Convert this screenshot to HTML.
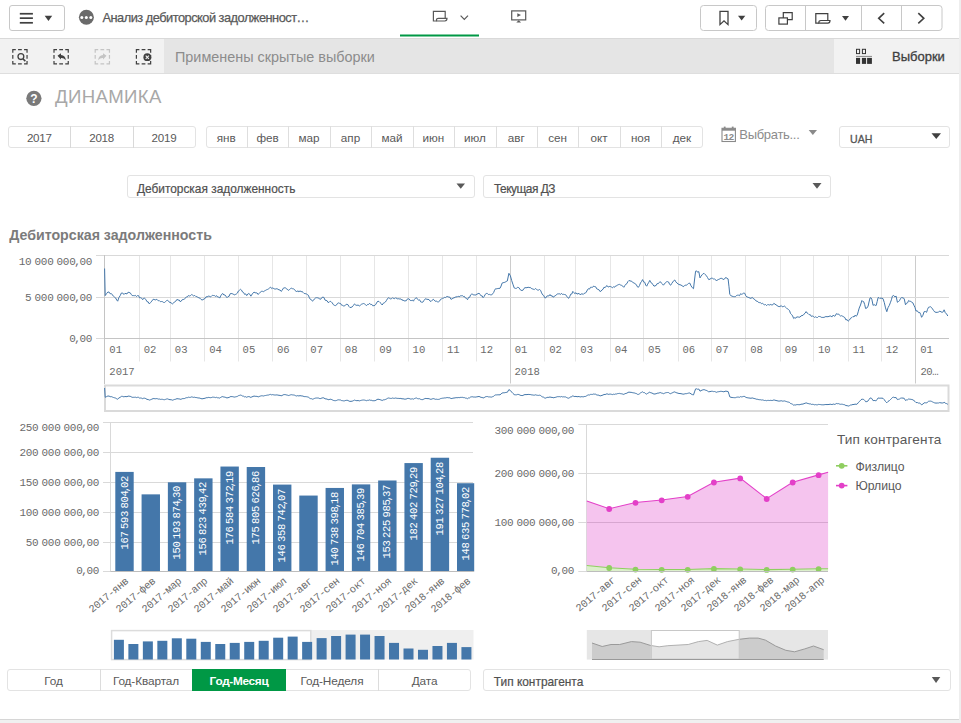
<!DOCTYPE html>
<html><head><meta charset="utf-8"><style>
html,body{margin:0;padding:0;}
body{width:961px;height:723px;position:relative;overflow:hidden;background:#ffffff;font-family:"Liberation Sans", sans-serif;}
.t{position:absolute;white-space:nowrap;line-height:1;}
svg{position:absolute;left:0;top:0;}
</style></head><body>

<div style="position:absolute;left:959px;top:0px;width:2px;height:723px;background:#eeeeee;"></div>
<div style="position:absolute;left:0px;top:719px;width:959px;height:1px;background:#d6d6d6;"></div>
<div style="position:absolute;left:0px;top:720px;width:961px;height:3px;background:#f0f0f0;"></div>
<div style="position:absolute;left:9px;top:5px;width:56px;height:26.3px;box-sizing:border-box;border:1px solid #c8c8c8;border-radius:3px;background:#fff;"></div>
<svg width="961" height="40" style="left:0;top:0">
<g fill="#404040">
<rect x="19.8" y="12.9" width="13.1" height="1.7"/><rect x="19.8" y="17.3" width="13.1" height="1.7"/><rect x="19.8" y="21.95" width="13.1" height="1.7"/>
<path d="M44.7 15.8 L52.2 15.8 L48.45 20.9 Z"/>
</g>
<circle cx="86.4" cy="17.3" r="7.5" fill="#6a6a6a"/>
<circle cx="81.8" cy="17.4" r="1.5" fill="#fff"/><circle cx="86.3" cy="17.4" r="1.5" fill="#fff"/><circle cx="90.8" cy="17.4" r="1.5" fill="#fff"/>
<!-- sheet icon -->
<g fill="none" stroke="#595959" stroke-width="1.2">
<path d="M445.2 18.2 V11.4 H433.4 V21 H436.6"/>
<path d="M436.6 21 Q436 18.3 438.6 18.3 H447 Q447 21 444.8 21 Z"/>
<path d="M460.6 15.6 L464.3 19.3 L468 15.6"/>
</g>
<rect x="400" y="34.5" width="79" height="2" fill="#009845"/>
<!-- present icon -->
<rect x="511.7" y="10.9" width="14" height="9" fill="none" stroke="#595959" stroke-width="1.2"/>
<path d="M517.3 13.2 L521 15 L517.3 16.9 Z" fill="#595959"/>
<path d="M516.3 22.6 L521.1 22.6 L518.7 20.2 Z" fill="#595959"/>
<!-- bookmark button -->
<rect x="700.5" y="5.5" width="56" height="25" rx="3" fill="#fff" stroke="#c8c8c8"/>
<path d="M720 11.4 V24.6 L724 20.8 L728 24.6 V11.4 Z" fill="none" stroke="#404040" stroke-width="1.3"/>
<path d="M738 15.8 L745.3 15.8 L741.65 20.6 Z" fill="#404040"/>
<!-- group -->
<rect x="765.5" y="5.5" width="176.5" height="25" rx="3" fill="#fff" stroke="#c8c8c8"/>
<path d="M805.5 5.5 V30.5 M861.5 5.5 V30.5 M901.5 5.5 V30.5" stroke="#c8c8c8"/>
<g fill="none" stroke="#404040" stroke-width="1.2">
<rect x="778.9" y="17.9" width="8.5" height="6.2"/>
<path d="M783.3 17.9 V12.6 H792.2 V19.6 H787.4"/>
<path d="M827.8 20.3 V13.6 H815.8 V23.2 H819"/>
<path d="M819 23.2 Q818.4 20.5 821 20.5 H830 Q830 23.2 827.8 23.2 Z"/>
<path d="M884.2 13.2 L878.7 18.3 L884.2 23.4" stroke-width="1.6"/>
<path d="M918.3 13.2 L923.8 18.3 L918.3 23.4" stroke-width="1.6"/>
</g>
<path d="M842 16 L849 16 L845.5 20.8 Z" fill="#404040"/>
</svg>
<div class="t" style="left:102.50px;top:12.06px;font-size:12.8px;color:#595959;font-weight:400;font-family:'Liberation Sans', sans-serif;letter-spacing:-0.5px;-webkit-text-stroke:0.25px #595959;">Анализ дебиторской задолженност…</div>
<div style="position:absolute;left:0px;top:38px;width:959px;height:1px;background:#d9d9d9;"></div>
<div style="position:absolute;left:0px;top:39px;width:164px;height:34px;background:#f2f2f2;"></div>
<div style="position:absolute;left:164px;top:39px;width:670px;height:34px;background:#e5e5e5;"></div>
<div style="position:absolute;left:834px;top:39px;width:125px;height:34px;background:#f2f2f2;"></div>
<div style="position:absolute;left:0px;top:73px;width:959px;height:1px;background:#dedede;"></div>
<svg width="961" height="80" style="left:0;top:0">
<g fill="none" stroke="#404040" stroke-width="1.2" stroke-dasharray="6 2.25 3.75 2.25" stroke-dashoffset="3">
<rect x="12.8" y="49.7" width="14.25" height="14.25"/>
<rect x="54" y="49.7" width="14.25" height="14.25"/>
<rect x="136.4" y="49.7" width="14.25" height="14.25"/>
</g>
<rect x="95.2" y="49.7" width="14.25" height="14.25" fill="none" stroke="#c4c4c4" stroke-width="1.2" stroke-dasharray="6 2.25 3.75 2.25" stroke-dashoffset="3"/>
<circle cx="20.9" cy="56.6" r="2.9" fill="none" stroke="#404040" stroke-width="1.3"/>
<path d="M22.9 58.7 L25.3 61.1" stroke="#404040" stroke-width="1.6"/>
<path d="M57.5 55.7 L61 53.2 L61 54.9 Q65.5 55 65.8 60.3 Q64 57.8 61 58 L61 59.6 Z" fill="#404040"/>
<path d="M106.5 55.7 L103 53.2 L103 54.9 Q98.5 55 98.2 60.3 Q100 57.8 103 58 L103 59.6 Z" fill="#c4c4c4"/>
<circle cx="147.3" cy="57.2" r="3.9" fill="#404040"/>
<path d="M145.7 55.6 L148.9 58.8 M148.9 55.6 L145.7 58.8" stroke="#f2f2f2" stroke-width="1.1"/>
<g fill="#333">
<rect x="856.5" y="49.3" width="3.1" height="4.3" fill="none" stroke="#333" stroke-width="1"/>
<rect x="862.4" y="49.3" width="3.1" height="4.3" fill="none" stroke="#333" stroke-width="1"/>
<rect x="856" y="55.9" width="16" height="1" fill="#888"/>
<rect x="856" y="57.9" width="4.1" height="6"/><rect x="861.9" y="57.9" width="4.2" height="6"/><rect x="867.1" y="57.9" width="4.8" height="6"/>
</g>
</svg>
<div class="t" style="left:175.00px;top:50.11px;font-size:14.4px;color:#8c8c8c;font-weight:400;font-family:'Liberation Sans', sans-serif;">Применены скрытые выборки</div>
<div class="t" style="left:892.00px;top:49.80px;font-size:13px;color:#404040;font-weight:400;font-family:'Liberation Sans', sans-serif;-webkit-text-stroke:0.3px #404040;">Выборки</div>
<svg width="961" height="120" style="left:0;top:0">
<circle cx="33.9" cy="98.3" r="7.6" fill="#7a7a7a"/>
<text x="33.9" y="102.6" font-family="Liberation Sans" font-weight="700" font-size="12" fill="#fff" text-anchor="middle">?</text>
</svg>
<div class="t" style="left:55.00px;top:88.26px;font-size:18.6px;color:#a8a8a8;font-weight:400;font-family:'Liberation Sans', sans-serif;letter-spacing:0.35px;">ДИНАМИКА</div>
<div style="position:absolute;left:7.6px;top:126px;width:188px;height:22px;box-sizing:border-box;border:1px solid #e3e3e3;border-radius:3px;background:#fff;"></div>
<div style="position:absolute;left:70px;top:126px;width:1px;height:22px;background:#d9d9d9;"></div>
<div style="position:absolute;left:132.5px;top:126px;width:1px;height:22px;background:#d9d9d9;"></div>
<div class="t" style="left:9.30px;width:60px;top:132.28px;font-size:11.6px;color:#595959;font-weight:400;font-family:'Liberation Sans', sans-serif;text-align:center;letter-spacing:-0.25px;">2017</div>
<div class="t" style="left:71.60px;width:60px;top:132.28px;font-size:11.6px;color:#595959;font-weight:400;font-family:'Liberation Sans', sans-serif;text-align:center;letter-spacing:-0.25px;">2018</div>
<div class="t" style="left:134.00px;width:60px;top:132.28px;font-size:11.6px;color:#595959;font-weight:400;font-family:'Liberation Sans', sans-serif;text-align:center;letter-spacing:-0.25px;">2019</div>
<div style="position:absolute;left:205.5px;top:126px;width:497.20000000000005px;height:21.5px;box-sizing:border-box;border:1px solid #e3e3e3;border-radius:3px;background:#fff;"></div>
<div class="t" style="left:206.22px;width:40px;top:132.00px;font-size:11.7px;color:#595959;font-weight:400;font-family:'Liberation Sans', sans-serif;text-align:center;">янв</div>
<div style="position:absolute;left:246.9px;top:126px;width:1px;height:21.5px;background:#dedede;"></div>
<div class="t" style="left:247.65px;width:40px;top:132.00px;font-size:11.7px;color:#595959;font-weight:400;font-family:'Liberation Sans', sans-serif;text-align:center;">фев</div>
<div style="position:absolute;left:288.4px;top:126px;width:1px;height:21.5px;background:#dedede;"></div>
<div class="t" style="left:289.08px;width:40px;top:132.00px;font-size:11.7px;color:#595959;font-weight:400;font-family:'Liberation Sans', sans-serif;text-align:center;">мар</div>
<div style="position:absolute;left:329.8px;top:126px;width:1px;height:21.5px;background:#dedede;"></div>
<div class="t" style="left:330.52px;width:40px;top:132.00px;font-size:11.7px;color:#595959;font-weight:400;font-family:'Liberation Sans', sans-serif;text-align:center;">апр</div>
<div style="position:absolute;left:371.2px;top:126px;width:1px;height:21.5px;background:#dedede;"></div>
<div class="t" style="left:371.95px;width:40px;top:132.00px;font-size:11.7px;color:#595959;font-weight:400;font-family:'Liberation Sans', sans-serif;text-align:center;">май</div>
<div style="position:absolute;left:412.7px;top:126px;width:1px;height:21.5px;background:#dedede;"></div>
<div class="t" style="left:413.38px;width:40px;top:132.00px;font-size:11.7px;color:#595959;font-weight:400;font-family:'Liberation Sans', sans-serif;text-align:center;">июн</div>
<div style="position:absolute;left:454.1px;top:126px;width:1px;height:21.5px;background:#dedede;"></div>
<div class="t" style="left:454.82px;width:40px;top:132.00px;font-size:11.7px;color:#595959;font-weight:400;font-family:'Liberation Sans', sans-serif;text-align:center;">июл</div>
<div style="position:absolute;left:495.5px;top:126px;width:1px;height:21.5px;background:#dedede;"></div>
<div class="t" style="left:496.25px;width:40px;top:132.00px;font-size:11.7px;color:#595959;font-weight:400;font-family:'Liberation Sans', sans-serif;text-align:center;">авг</div>
<div style="position:absolute;left:537.0px;top:126px;width:1px;height:21.5px;background:#dedede;"></div>
<div class="t" style="left:537.68px;width:40px;top:132.00px;font-size:11.7px;color:#595959;font-weight:400;font-family:'Liberation Sans', sans-serif;text-align:center;">сен</div>
<div style="position:absolute;left:578.4px;top:126px;width:1px;height:21.5px;background:#dedede;"></div>
<div class="t" style="left:579.12px;width:40px;top:132.00px;font-size:11.7px;color:#595959;font-weight:400;font-family:'Liberation Sans', sans-serif;text-align:center;">окт</div>
<div style="position:absolute;left:619.8px;top:126px;width:1px;height:21.5px;background:#dedede;"></div>
<div class="t" style="left:620.55px;width:40px;top:132.00px;font-size:11.7px;color:#595959;font-weight:400;font-family:'Liberation Sans', sans-serif;text-align:center;">ноя</div>
<div style="position:absolute;left:661.3px;top:126px;width:1px;height:21.5px;background:#dedede;"></div>
<div class="t" style="left:661.98px;width:40px;top:132.00px;font-size:11.7px;color:#595959;font-weight:400;font-family:'Liberation Sans', sans-serif;text-align:center;">дек</div>
<svg width="961" height="160" style="left:0;top:0">
<rect x="722" y="128.3" width="13.4" height="13.2" fill="none" stroke="#8a8a8a" stroke-width="1.1"/>
<rect x="722" y="128.3" width="13.4" height="2.4" fill="#8a8a8a"/>
<rect x="723.8" y="126.6" width="1.8" height="2" fill="#8a8a8a"/><rect x="731.8" y="126.6" width="1.8" height="2" fill="#8a8a8a"/>
<text x="723.4" y="139.6" font-family="Liberation Mono" font-size="9.6" font-weight="700" fill="#8a8a8a" letter-spacing="-0.6">12</text>
<path d="M808.7 130 L817 130 L812.85 135 Z" fill="#8a8a8a"/>
</svg>
<div class="t" style="left:739.30px;top:128.10px;font-size:13px;color:#8c8c8c;font-weight:400;font-family:'Liberation Sans', sans-serif;letter-spacing:-0.3px;">Выбрать...</div>
<div style="position:absolute;left:839.3px;top:126px;width:111px;height:21.6px;box-sizing:border-box;border:1px solid #e3e3e3;border-radius:3px;background:#fff;"></div>
<div class="t" style="left:850.00px;top:133.83px;font-size:10.6px;color:#555555;font-weight:400;font-family:'Liberation Sans', sans-serif;-webkit-text-stroke:0.3px #555555;">UAH</div>
<div style="position:absolute;left:126.6px;top:175px;width:348px;height:22.7px;box-sizing:border-box;border:1px solid #e3e3e3;border-radius:3px;background:#fff;"></div>
<div style="position:absolute;left:483px;top:175px;width:348.2px;height:22.7px;box-sizing:border-box;border:1px solid #e3e3e3;border-radius:3px;background:#fff;"></div>
<div class="t" style="left:136.90px;top:184.03px;font-size:11.9px;color:#505050;font-weight:400;font-family:'Liberation Sans', sans-serif;-webkit-text-stroke:0.2px #505050;">Дебиторская задолженность</div>
<div class="t" style="left:494.00px;top:184.03px;font-size:11.9px;color:#505050;font-weight:400;font-family:'Liberation Sans', sans-serif;letter-spacing:-0.5px;-webkit-text-stroke:0.2px #505050;">Текущая ДЗ</div>
<svg width="961" height="200" style="left:0;top:0">
<path d="M931.5 133.3 L941 133.3 L936.25 139 Z" fill="#404040"/>
<path d="M456.5 183.4 L465 183.4 L460.75 188.8 Z" fill="#595959"/>
<path d="M812.5 183 L821.5 183 L817 188.8 Z" fill="#595959"/>
</svg>
<div class="t" style="left:9.20px;top:228.18px;font-size:14.2px;color:#7b7b7b;font-weight:700;font-family:'Liberation Sans', sans-serif;">Дебиторская задолженность</div>
<svg width="961" height="420" style="left:0;top:0">
<path d="M104.5 255 V383.5" stroke="#cccccc" stroke-width="1"/>
<path d="M139.5 255 V338 M139.5 338 V361.5" stroke="#e6e6e6" stroke-width="1"/>
<path d="M170.5 255 V338 M170.5 338 V361.5" stroke="#e6e6e6" stroke-width="1"/>
<path d="M204.5 255 V338 M204.5 338 V361.5" stroke="#e6e6e6" stroke-width="1"/>
<path d="M238.5 255 V338 M238.5 338 V361.5" stroke="#e6e6e6" stroke-width="1"/>
<path d="M272.5 255 V338 M272.5 338 V361.5" stroke="#e6e6e6" stroke-width="1"/>
<path d="M306.5 255 V338 M306.5 338 V361.5" stroke="#e6e6e6" stroke-width="1"/>
<path d="M340.5 255 V338 M340.5 338 V361.5" stroke="#e6e6e6" stroke-width="1"/>
<path d="M374.5 255 V338 M374.5 338 V361.5" stroke="#e6e6e6" stroke-width="1"/>
<path d="M408.5 255 V338 M408.5 338 V361.5" stroke="#e6e6e6" stroke-width="1"/>
<path d="M442.5 255 V338 M442.5 338 V361.5" stroke="#e6e6e6" stroke-width="1"/>
<path d="M476.5 255 V338 M476.5 338 V361.5" stroke="#e6e6e6" stroke-width="1"/>
<path d="M510.5 255 V383.5" stroke="#cccccc" stroke-width="1"/>
<path d="M544.5 255 V338 M544.5 338 V361.5" stroke="#e6e6e6" stroke-width="1"/>
<path d="M575.5 255 V338 M575.5 338 V361.5" stroke="#e6e6e6" stroke-width="1"/>
<path d="M610.5 255 V338 M610.5 338 V361.5" stroke="#e6e6e6" stroke-width="1"/>
<path d="M643.5 255 V338 M643.5 338 V361.5" stroke="#e6e6e6" stroke-width="1"/>
<path d="M678.5 255 V338 M678.5 338 V361.5" stroke="#e6e6e6" stroke-width="1"/>
<path d="M711.5 255 V338 M711.5 338 V361.5" stroke="#e6e6e6" stroke-width="1"/>
<path d="M745.5 255 V338 M745.5 338 V361.5" stroke="#e6e6e6" stroke-width="1"/>
<path d="M780.5 255 V338 M780.5 338 V361.5" stroke="#e6e6e6" stroke-width="1"/>
<path d="M813.5 255 V338 M813.5 338 V361.5" stroke="#e6e6e6" stroke-width="1"/>
<path d="M848.5 255 V338 M848.5 338 V361.5" stroke="#e6e6e6" stroke-width="1"/>
<path d="M881.5 255 V338 M881.5 338 V361.5" stroke="#e6e6e6" stroke-width="1"/>
<path d="M915.5 255 V383.5" stroke="#cccccc" stroke-width="1"/>
<path d="M104.5 255.5 H949 M104.5 297.5 H949" stroke="#d9d9d9" stroke-width="1"/>
<path d="M104.5 338.5 H949" stroke="#c4c4c4" stroke-width="1"/>
<path d="M96 255.5 H104.5 M96 297.5 H104.5 M96 338.5 H104.5" stroke="#d9d9d9" stroke-width="1"/>
<path d="M104.5 255 V384" stroke="#c4c4c4" stroke-width="1"/>
<polyline points="104.6,268.5 105.2,295.6 106.6,293.5 107.9,292.0 109.1,292.1 110.2,293.8 111.3,293.5 112.5,295.0 113.5,296.3 114.6,297.2 115.6,297.9 116.7,300.0 117.7,301.2 118.9,297.6 120.2,295.6 121.4,293.0 122.7,293.0 123.9,294.5 124.9,293.4 126.0,293.6 127.0,293.9 128.1,292.2 129.1,292.5 130.2,292.8 131.2,294.3 132.2,295.6 133.3,295.6 134.4,295.7 135.4,295.4 136.4,296.5 137.5,295.6 138.5,295.6 139.6,297.9 140.6,297.7 141.7,298.2 142.7,299.7 143.7,298.3 144.7,298.3 145.8,299.4 147.0,301.7 148.2,301.9 149.3,303.9 150.6,302.5 151.8,301.1 153.1,299.3 154.1,299.4 155.2,300.0 156.2,299.4 157.3,299.7 158.3,300.8 159.3,300.6 160.4,301.7 161.4,301.5 162.4,301.6 163.5,302.4 164.5,302.5 165.5,301.6 166.6,300.6 167.6,300.2 168.8,301.7 170.0,302.5 171.2,302.7 172.4,304.1 173.6,303.0 174.7,301.7 175.8,301.2 177.0,299.3 178.1,300.2 179.1,299.9 180.1,301.6 181.2,301.2 182.2,299.7 183.2,299.5 184.3,299.3 185.3,298.1 186.4,296.9 187.4,296.9 188.4,295.5 189.5,296.0 190.6,295.6 191.6,294.5 192.6,295.1 193.7,296.0 194.7,295.4 195.8,296.5 196.8,296.6 197.8,297.3 198.9,297.8 199.9,298.1 200.9,299.3 202.0,300.0 203.0,299.7 204.0,298.9 205.1,298.5 206.1,296.7 207.2,297.1 208.2,296.0 209.2,296.2 210.3,296.8 211.3,296.4 212.4,295.3 213.4,295.5 214.5,295.6 215.5,296.4 216.6,295.7 217.6,297.0 218.7,297.0 219.7,298.1 220.7,295.9 221.8,294.2 222.8,293.5 223.9,295.0 224.9,294.9 225.9,296.2 227.0,297.7 228.0,296.5 229.1,296.3 230.1,293.8 231.1,293.5 232.2,293.7 233.2,294.1 234.2,294.9 235.3,294.5 236.3,294.0 237.4,293.1 238.4,291.0 239.5,290.2 240.5,289.3 241.5,290.1 242.6,292.1 243.6,292.5 244.6,294.4 245.7,293.9 246.7,295.6 247.8,294.0 248.8,293.5 249.9,294.4 250.9,296.2 251.9,294.3 253.0,293.4 254.0,292.0 255.1,292.8 256.1,292.8 257.1,293.0 258.2,294.5 259.2,293.3 260.3,292.2 261.3,291.4 262.4,291.3 263.4,291.7 264.4,291.0 265.5,290.4 266.5,289.8 267.6,289.4 268.6,288.8 269.6,287.9 270.6,287.1 271.7,288.6 272.7,287.9 273.8,288.6 274.8,289.0 275.8,289.0 276.9,288.7 277.9,289.2 279.0,289.9 280.1,290.0 281.1,291.4 282.1,290.5 283.2,288.3 284.2,287.9 285.2,287.7 286.2,288.6 287.3,289.2 288.3,290.4 289.4,289.7 290.4,288.7 291.4,288.2 292.5,288.7 293.6,288.9 294.6,289.6 295.6,290.9 296.7,292.0 297.8,290.7 298.9,291.9 300.0,290.8 301.1,291.7 302.1,291.5 303.1,292.4 304.2,293.5 305.2,293.6 306.3,293.9 307.3,294.5 308.3,295.2 309.4,297.8 310.4,299.4 311.5,299.8 312.5,301.2 313.5,300.3 314.6,298.7 315.6,297.9 316.6,297.7 317.7,297.8 318.7,298.0 319.8,299.3 320.8,299.1 321.9,297.5 322.9,297.2 323.9,297.4 325.0,300.1 326.0,300.4 327.1,300.8 328.1,302.5 329.1,302.3 330.2,301.2 331.2,301.8 332.2,302.8 333.3,304.6 334.3,305.3 335.4,305.6 336.4,305.1 337.5,303.4 338.5,302.9 339.5,303.3 340.6,303.5 341.6,305.2 342.7,305.4 343.7,306.0 344.7,305.9 345.8,304.6 346.8,304.3 347.9,304.6 348.9,306.4 349.9,307.5 351.0,307.4 352.2,306.9 353.3,305.6 354.5,303.9 355.7,305.0 356.9,305.4 358.1,305.0 359.3,306.0 360.3,305.3 361.4,304.3 362.4,303.9 363.4,303.5 364.5,303.9 365.6,304.8 366.6,305.6 367.6,304.4 368.7,304.4 369.7,303.3 370.8,304.7 371.8,304.4 372.8,305.8 373.9,305.6 374.9,305.4 375.9,304.2 377.0,302.1 378.0,301.2 379.1,301.6 380.1,302.6 381.1,303.5 382.2,305.0 383.2,303.3 384.3,302.8 385.3,302.1 386.3,300.7 387.4,298.9 388.4,297.7 389.5,298.3 390.5,298.9 391.6,298.7 392.6,297.7 393.6,298.5 394.7,298.7 395.7,297.7 396.8,298.6 397.8,298.9 398.8,298.7 399.9,299.1 400.9,298.9 402.0,300.3 403.0,299.8 404.1,301.0 405.1,300.8 406.1,300.9 407.2,299.2 408.2,298.7 409.2,299.0 410.3,300.5 411.3,300.6 412.4,300.1 413.4,301.2 414.4,299.4 415.5,298.2 416.5,297.7 417.5,299.3 418.6,300.1 419.6,299.8 420.7,301.9 421.7,302.2 422.8,302.2 423.8,300.7 424.8,299.3 425.9,298.7 426.9,299.4 428.0,299.3 429.1,299.7 430.1,301.2 431.1,301.4 432.2,300.2 433.2,299.3 434.2,300.0 435.3,301.3 436.3,301.1 437.4,301.8 438.4,301.9 439.5,301.2 440.5,299.4 441.5,298.9 442.6,298.3 443.6,298.1 444.7,297.3 445.7,297.5 446.8,296.5 447.8,296.6 448.8,297.1 449.9,297.2 450.9,299.2 451.9,299.1 452.9,298.2 454.0,297.8 455.1,297.4 456.1,296.6 457.1,297.2 458.2,296.1 459.2,296.9 460.2,295.9 461.3,295.8 462.3,295.6 463.3,296.5 464.4,296.4 465.4,298.0 466.5,298.3 467.5,299.7 468.6,297.4 469.6,297.4 470.6,294.9 471.7,294.1 472.8,294.3 473.8,295.0 474.8,294.9 475.9,295.0 476.9,294.1 478.0,293.8 479.0,293.1 480.0,294.3 481.1,295.9 482.1,295.8 483.1,297.7 484.2,296.4 485.2,294.4 486.3,293.5 487.3,293.4 488.4,294.6 489.4,294.4 490.5,294.8 491.5,295.0 492.5,293.9 493.6,292.6 494.6,290.2 495.6,288.7 496.7,288.8 497.8,288.5 498.9,288.4 500.0,288.3 501.1,286.0 502.1,283.1 503.1,282.7 504.2,282.5 505.2,282.1 506.2,281.5 507.3,281.0 508.9,273.3 510.4,275.8 511.7,280.6 512.9,284.2 514.2,287.9 515.4,288.4 516.5,288.3 517.7,287.3 518.8,287.6 519.8,289.0 520.9,290.4 521.9,290.4 522.9,290.3 524.0,288.4 525.0,287.7 526.0,287.7 527.0,287.7 528.1,287.2 529.1,287.6 530.2,287.4 531.2,288.3 532.2,288.8 533.3,289.2 534.3,289.6 535.4,288.5 536.4,289.3 537.5,290.0 538.5,290.1 539.5,289.5 540.6,290.4 541.6,292.9 542.7,294.9 543.7,295.4 544.7,297.7 545.8,297.9 546.8,296.2 547.9,295.8 548.9,296.0 550.0,294.5 551.0,296.0 552.1,295.7 553.1,297.2 554.1,296.4 555.2,295.9 556.2,294.9 557.3,294.0 558.3,293.9 559.3,293.7 560.4,294.5 561.4,293.3 562.4,294.4 563.5,294.3 564.5,294.5 565.5,294.6 566.6,296.1 567.7,297.6 568.7,298.3 569.7,296.6 570.8,294.1 571.8,294.0 572.8,291.4 573.8,292.6 574.9,293.6 576.0,292.7 577.0,294.1 578.0,293.7 579.1,293.4 580.1,294.8 581.1,294.0 582.2,293.8 583.2,294.5 584.2,293.3 585.3,293.2 586.3,292.0 587.4,290.0 588.4,288.7 589.5,289.1 590.5,287.3 591.5,287.3 592.6,287.3 593.7,286.0 594.7,286.6 595.7,286.8 596.8,288.9 597.8,289.3 598.9,289.7 599.9,291.4 600.9,291.3 602.0,289.9 603.0,289.3 604.0,287.2 605.1,287.7 606.1,286.2 607.1,285.6 608.2,287.1 609.2,286.5 610.3,286.5 611.4,287.0 612.4,287.8 613.5,286.7 614.5,287.3 615.5,286.0 616.5,286.0 617.6,284.8 618.6,284.6 619.6,284.4 620.7,285.1 621.7,285.4 622.8,286.2 623.8,287.3 624.8,285.6 625.9,284.2 626.9,283.6 628.0,281.4 629.0,280.4 630.0,281.0 631.1,281.0 632.2,281.8 633.2,282.7 634.2,282.8 635.3,284.1 636.3,284.6 637.4,286.8 638.4,287.3 639.5,285.5 640.5,282.9 641.5,281.5 642.6,279.6 643.6,282.0 644.7,282.2 645.7,285.1 646.7,286.2 647.7,284.1 648.8,282.3 649.8,280.4 650.8,282.5 651.9,283.1 653.0,284.8 654.0,286.2 655.0,285.8 656.1,285.5 657.1,283.6 658.1,283.7 659.2,282.7 660.2,281.6 661.3,283.0 662.3,283.8 663.4,285.2 664.4,284.0 665.5,282.6 666.5,281.8 667.5,281.6 668.6,282.0 669.6,284.4 670.7,285.2 671.7,283.5 672.8,282.0 673.8,280.6 674.8,280.0 675.8,281.8 676.9,283.0 678.0,283.8 679.0,284.6 680.0,284.7 681.0,285.1 682.1,285.7 683.1,286.6 684.2,286.1 685.2,285.1 686.3,285.2 687.5,284.4 688.6,283.4 689.8,283.1 691.0,285.8 692.3,287.7 693.5,288.7 694.5,280.0 695.6,271.2 696.7,270.9 697.7,272.3 698.8,271.6 700.0,277.9 701.0,276.2 702.1,274.8 703.1,273.7 704.1,273.4 705.2,274.6 706.2,275.4 707.5,277.5 708.7,279.6 710.0,279.2 711.2,278.2 712.5,278.3 713.5,279.0 714.5,278.8 715.6,279.9 716.6,281.0 717.7,279.6 718.7,279.4 719.8,278.9 720.8,278.3 721.8,278.4 722.9,279.1 723.9,279.6 725.0,278.1 726.0,277.5 727.0,278.4 728.1,278.9 729.0,286.8 729.8,294.5 731.0,295.7 732.1,296.2 733.3,296.6 734.3,296.7 735.4,296.7 736.4,295.6 737.5,295.2 738.5,295.2 739.5,295.7 740.6,293.7 741.6,294.3 742.7,293.8 743.7,293.1 744.8,293.3 745.8,295.8 746.9,296.9 747.9,297.2 748.9,297.6 750.0,298.1 751.0,298.4 752.1,297.4 753.1,298.3 754.1,299.1 755.2,299.8 756.2,301.1 757.2,301.2 758.2,302.2 759.3,302.6 760.3,302.6 761.4,303.6 762.4,303.3 763.5,304.2 764.5,304.8 765.5,304.5 766.6,305.6 767.6,304.6 768.7,304.7 769.7,305.0 770.8,304.4 771.8,305.0 772.8,304.8 773.9,303.3 774.9,304.1 776.0,304.8 777.0,305.5 778.1,306.3 779.1,306.6 780.1,306.5 781.2,305.5 782.2,306.8 783.3,306.6 784.3,306.0 785.3,306.9 786.3,307.8 787.4,308.9 788.4,309.5 789.5,310.5 790.5,313.5 791.6,314.5 792.6,315.9 793.7,318.5 794.7,317.7 795.8,318.2 796.8,316.8 797.8,317.0 798.8,317.1 799.9,317.2 800.9,316.0 802.0,315.5 803.0,315.4 804.0,314.1 805.1,313.2 806.1,311.6 807.1,313.0 808.2,313.7 809.2,314.7 810.3,314.7 811.3,316.4 812.3,316.0 813.4,316.4 814.4,317.4 815.5,316.8 816.5,317.4 817.5,317.5 818.6,316.4 819.6,316.5 820.7,316.8 821.8,317.5 822.8,317.4 823.9,317.4 824.9,317.0 825.9,316.5 827.0,316.8 828.0,316.6 829.0,316.5 830.1,315.8 831.1,316.4 832.1,316.8 833.2,315.1 834.2,316.2 835.3,315.8 836.3,313.7 837.4,314.2 838.4,313.9 839.4,315.1 840.5,316.0 841.5,315.7 842.6,316.0 843.6,317.0 844.8,317.5 845.9,319.9 847.1,319.6 848.2,321.2 849.4,320.1 850.6,318.2 851.8,317.6 853.0,316.4 854.0,317.0 855.0,315.2 856.1,316.2 857.1,315.4 858.2,311.8 859.2,308.1 860.5,305.0 861.9,300.5 862.8,301.5 863.7,301.7 864.7,304.6 865.6,308.5 866.9,308.0 868.1,306.1 869.0,302.0 870.0,298.0 870.9,297.7 871.8,299.2 873.1,305.4 874.1,304.5 875.2,305.4 876.2,305.4 877.2,301.4 878.1,297.6 879.0,297.7 879.9,298.6 880.9,298.0 882.0,298.3 883.0,298.6 884.3,302.6 885.5,307.9 886.8,311.7 888.0,307.7 889.3,305.4 890.3,302.8 891.4,299.8 892.4,296.1 893.6,295.4 894.9,296.9 896.1,296.1 897.4,302.3 898.5,301.5 899.5,300.7 900.6,298.4 901.7,297.6 903.0,297.9 904.2,298.6 905.5,304.8 906.5,303.2 907.6,302.8 908.6,300.5 909.7,301.3 910.8,301.4 911.8,302.2 912.9,302.9 913.9,305.2 915.0,307.5 916.0,311.0 917.3,310.8 918.5,312.6 919.8,312.5 920.7,314.5 921.6,317.3 922.9,315.3 924.1,311.7 925.4,311.5 926.6,312.3 927.5,309.4 928.5,307.3 929.5,307.0 930.4,306.7 931.4,307.4 932.5,308.9 933.5,310.4 934.7,311.9 936.0,312.4 937.2,312.3 938.5,312.2 939.7,311.0 941.0,311.9 942.2,312.3 943.2,311.8 944.1,309.8 945.3,312.7 946.6,314.0 947.8,316.0" fill="none" stroke="#4477aa" stroke-width="1" stroke-linejoin="round"/>
<rect x="105" y="385.5" width="843.5" height="25.5" fill="#fff" stroke="#dadada" stroke-width="2"/>
<polyline points="104.6,388.0 105.2,397.3 106.6,396.6 107.9,396.0 109.1,396.1 110.2,396.7 111.3,396.6 112.5,397.1 113.5,397.5 114.6,397.8 115.6,398.1 116.7,398.8 117.7,399.2 118.9,398.0 120.2,397.3 121.4,396.4 122.7,396.4 123.9,396.9 124.9,396.5 126.0,396.6 127.0,396.7 128.1,396.1 129.1,396.2 130.2,396.3 131.2,396.8 132.2,397.3 133.3,397.3 134.4,397.3 135.4,397.2 136.4,397.6 137.5,397.3 138.5,397.3 139.6,398.1 140.6,398.0 141.7,398.2 142.7,398.7 143.7,398.2 144.7,398.2 145.8,398.6 147.0,399.4 148.2,399.5 149.3,400.1 150.6,399.7 151.8,399.2 153.1,398.6 154.1,398.6 155.2,398.8 156.2,398.6 157.3,398.7 158.3,399.1 159.3,399.0 160.4,399.4 161.4,399.3 162.4,399.3 163.5,399.6 164.5,399.7 165.5,399.4 166.6,399.0 167.6,398.9 168.8,399.4 170.0,399.7 171.2,399.7 172.4,400.2 173.6,399.8 174.7,399.4 175.8,399.2 177.0,398.6 178.1,398.9 179.1,398.8 180.1,399.3 181.2,399.2 182.2,398.7 183.2,398.6 184.3,398.6 185.3,398.1 186.4,397.7 187.4,397.7 188.4,397.2 189.5,397.4 190.6,397.3 191.6,396.9 192.6,397.1 193.7,397.4 194.7,397.2 195.8,397.6 196.8,397.6 197.8,397.9 198.9,398.0 199.9,398.1 200.9,398.6 202.0,398.8 203.0,398.7 204.0,398.4 205.1,398.3 206.1,397.7 207.2,397.8 208.2,397.4 209.2,397.5 210.3,397.7 211.3,397.6 212.4,397.2 213.4,397.2 214.5,397.3 215.5,397.6 216.6,397.3 217.6,397.8 218.7,397.8 219.7,398.1 220.7,397.4 221.8,396.8 222.8,396.6 223.9,397.1 224.9,397.1 225.9,397.5 227.0,398.0 228.0,397.6 229.1,397.5 230.1,396.7 231.1,396.6 232.2,396.6 233.2,396.8 234.2,397.1 235.3,396.9 236.3,396.7 237.4,396.4 238.4,395.7 239.5,395.4 240.5,395.1 241.5,395.4 242.6,396.1 243.6,396.2 244.6,396.9 245.7,396.7 246.7,397.3 247.8,396.7 248.8,396.6 249.9,396.9 250.9,397.5 251.9,396.8 253.0,396.5 254.0,396.0 255.1,396.3 256.1,396.3 257.1,396.4 258.2,396.9 259.2,396.5 260.3,396.1 261.3,395.8 262.4,395.8 263.4,396.0 264.4,395.7 265.5,395.5 266.5,395.3 267.6,395.1 268.6,395.0 269.6,394.6 270.6,394.4 271.7,394.9 272.7,394.6 273.8,394.9 274.8,395.0 275.8,395.0 276.9,394.9 277.9,395.1 279.0,395.3 280.1,395.4 281.1,395.8 282.1,395.5 283.2,394.8 284.2,394.6 285.2,394.6 286.2,394.9 287.3,395.1 288.3,395.5 289.4,395.3 290.4,394.9 291.4,394.7 292.5,394.9 293.6,395.0 294.6,395.2 295.6,395.7 296.7,396.0 297.8,395.6 298.9,396.0 300.0,395.6 301.1,395.9 302.1,395.9 303.1,396.2 304.2,396.6 305.2,396.6 306.3,396.7 307.3,396.9 308.3,397.1 309.4,398.0 310.4,398.6 311.5,398.7 312.5,399.2 313.5,398.9 314.6,398.4 315.6,398.1 316.6,398.0 317.7,398.0 318.7,398.1 319.8,398.6 320.8,398.5 321.9,398.0 322.9,397.8 323.9,397.9 325.0,398.8 326.0,398.9 327.1,399.1 328.1,399.7 329.1,399.6 330.2,399.2 331.2,399.4 332.2,399.8 333.3,400.4 334.3,400.6 335.4,400.7 336.4,400.5 337.5,400.0 338.5,399.8 339.5,399.9 340.6,400.0 341.6,400.6 342.7,400.7 343.7,400.9 344.7,400.8 345.8,400.4 346.8,400.3 347.9,400.4 348.9,401.0 349.9,401.4 351.0,401.3 352.2,401.2 353.3,400.7 354.5,400.1 355.7,400.5 356.9,400.7 358.1,400.5 359.3,400.9 360.3,400.6 361.4,400.3 362.4,400.1 363.4,400.0 364.5,400.1 365.6,400.4 366.6,400.7 367.6,400.3 368.7,400.3 369.7,399.9 370.8,400.4 371.8,400.3 372.8,400.8 373.9,400.7 374.9,400.7 375.9,400.3 377.0,399.5 378.0,399.2 379.1,399.4 380.1,399.7 381.1,400.0 382.2,400.5 383.2,399.9 384.3,399.8 385.3,399.5 386.3,399.1 387.4,398.4 388.4,398.0 389.5,398.2 390.5,398.4 391.6,398.4 392.6,398.0 393.6,398.3 394.7,398.3 395.7,398.0 396.8,398.3 397.8,398.4 398.8,398.4 399.9,398.5 400.9,398.4 402.0,398.9 403.0,398.7 404.1,399.1 405.1,399.1 406.1,399.1 407.2,398.5 408.2,398.4 409.2,398.5 410.3,399.0 411.3,399.0 412.4,398.8 413.4,399.2 414.4,398.6 415.5,398.2 416.5,398.0 417.5,398.6 418.6,398.8 419.6,398.7 420.7,399.4 421.7,399.6 422.8,399.6 423.8,399.1 424.8,398.6 425.9,398.4 426.9,398.6 428.0,398.6 429.1,398.7 430.1,399.2 431.1,399.3 432.2,398.9 433.2,398.6 434.2,398.8 435.3,399.3 436.3,399.2 437.4,399.4 438.4,399.4 439.5,399.2 440.5,398.6 441.5,398.4 442.6,398.2 443.6,398.1 444.7,397.9 445.7,397.9 446.8,397.6 447.8,397.6 448.8,397.8 449.9,397.8 450.9,398.5 451.9,398.5 452.9,398.2 454.0,398.0 455.1,397.9 456.1,397.6 457.1,397.8 458.2,397.5 459.2,397.7 460.2,397.4 461.3,397.4 462.3,397.3 463.3,397.6 464.4,397.6 465.4,398.1 466.5,398.2 467.5,398.7 468.6,397.9 469.6,397.9 470.6,397.0 471.7,396.8 472.8,396.8 473.8,397.1 474.8,397.0 475.9,397.1 476.9,396.8 478.0,396.7 479.0,396.4 480.0,396.9 481.1,397.4 482.1,397.4 483.1,398.0 484.2,397.6 485.2,396.9 486.3,396.6 487.3,396.5 488.4,396.9 489.4,396.9 490.5,397.0 491.5,397.1 492.5,396.7 493.6,396.3 494.6,395.4 495.6,394.9 496.7,394.9 497.8,394.8 498.9,394.8 500.0,394.8 501.1,394.0 502.1,393.0 503.1,392.8 504.2,392.8 505.2,392.6 506.2,392.4 507.3,392.3 508.9,389.6 510.4,390.5 511.7,392.1 512.9,393.4 514.2,394.6 515.4,394.8 516.5,394.8 517.7,394.4 518.8,394.5 519.8,395.0 520.9,395.5 521.9,395.5 522.9,395.5 524.0,394.8 525.0,394.6 526.0,394.6 527.0,394.6 528.1,394.4 529.1,394.5 530.2,394.5 531.2,394.8 532.2,394.9 533.3,395.1 534.3,395.2 535.4,394.8 536.4,395.1 537.5,395.3 538.5,395.4 539.5,395.2 540.6,395.5 541.6,396.4 542.7,397.0 543.7,397.2 544.7,398.0 545.8,398.1 546.8,397.5 547.9,397.3 548.9,397.4 550.0,396.9 551.0,397.4 552.1,397.3 553.1,397.8 554.1,397.6 555.2,397.4 556.2,397.1 557.3,396.7 558.3,396.7 559.3,396.6 560.4,396.9 561.4,396.5 562.4,396.9 563.5,396.8 564.5,396.9 565.5,396.9 566.6,397.5 567.7,398.0 568.7,398.2 569.7,397.6 570.8,396.8 571.8,396.7 572.8,395.8 573.8,396.3 574.9,396.6 576.0,396.3 577.0,396.8 578.0,396.6 579.1,396.5 580.1,397.0 581.1,396.7 582.2,396.7 583.2,396.9 584.2,396.5 585.3,396.5 586.3,396.0 587.4,395.3 588.4,394.9 589.5,395.0 590.5,394.4 591.5,394.4 592.6,394.4 593.7,394.0 594.7,394.2 595.7,394.2 596.8,395.0 597.8,395.1 598.9,395.2 599.9,395.8 600.9,395.8 602.0,395.3 603.0,395.1 604.0,394.4 605.1,394.6 606.1,394.1 607.1,393.8 608.2,394.4 609.2,394.2 610.3,394.1 611.4,394.3 612.4,394.6 613.5,394.2 614.5,394.4 615.5,394.0 616.5,394.0 617.6,393.6 618.6,393.5 619.6,393.4 620.7,393.7 621.7,393.8 622.8,394.1 623.8,394.4 624.8,393.8 625.9,393.4 626.9,393.2 628.0,392.4 629.0,392.1 630.0,392.3 631.1,392.3 632.2,392.6 633.2,392.8 634.2,392.9 635.3,393.3 636.3,393.5 637.4,394.3 638.4,394.4 639.5,393.8 640.5,392.9 641.5,392.4 642.6,391.8 643.6,392.6 644.7,392.7 645.7,393.7 646.7,394.1 647.7,393.3 648.8,392.7 649.8,392.1 650.8,392.8 651.9,393.0 653.0,393.6 654.0,394.1 655.0,393.9 656.1,393.8 657.1,393.2 658.1,393.2 659.2,392.9 660.2,392.5 661.3,393.0 662.3,393.2 663.4,393.7 664.4,393.3 665.5,392.8 666.5,392.6 667.5,392.5 668.6,392.6 669.6,393.4 670.7,393.7 671.7,393.1 672.8,392.6 673.8,392.1 674.8,391.9 675.8,392.5 676.9,392.9 678.0,393.2 679.0,393.5 680.0,393.5 681.0,393.7 682.1,393.9 683.1,394.2 684.2,394.0 685.2,393.7 686.3,393.7 687.5,393.4 688.6,393.1 689.8,393.0 691.0,393.9 692.3,394.6 693.5,394.9 694.5,391.9 695.6,388.9 696.7,388.8 697.7,389.3 698.8,389.0 700.0,391.2 701.0,390.6 702.1,390.1 703.1,389.8 704.1,389.6 705.2,390.1 706.2,390.3 707.5,391.0 708.7,391.8 710.0,391.6 711.2,391.3 712.5,391.3 713.5,391.6 714.5,391.5 715.6,391.9 716.6,392.3 717.7,391.8 718.7,391.7 719.8,391.5 720.8,391.3 721.8,391.4 722.9,391.6 723.9,391.8 725.0,391.3 726.0,391.1 727.0,391.4 728.1,391.5 729.0,394.2 729.8,396.9 731.0,397.3 732.1,397.5 733.3,397.6 734.3,397.7 735.4,397.7 736.4,397.3 737.5,397.1 738.5,397.1 739.5,397.3 740.6,396.6 741.6,396.9 742.7,396.7 743.7,396.4 744.8,396.5 745.8,397.3 746.9,397.7 747.9,397.8 748.9,398.0 750.0,398.1 751.0,398.3 752.1,397.9 753.1,398.2 754.1,398.5 755.2,398.7 756.2,399.2 757.2,399.2 758.2,399.5 759.3,399.7 760.3,399.7 761.4,400.0 762.4,399.9 763.5,400.2 764.5,400.5 765.5,400.4 766.6,400.7 767.6,400.4 768.7,400.4 769.7,400.5 770.8,400.3 771.8,400.5 772.8,400.4 773.9,399.9 774.9,400.2 776.0,400.5 777.0,400.7 778.1,401.0 779.1,401.1 780.1,401.0 781.2,400.7 782.2,401.1 783.3,401.1 784.3,400.9 785.3,401.2 786.3,401.5 787.4,401.9 788.4,402.1 789.5,402.4 790.5,403.5 791.6,403.8 792.6,404.3 793.7,405.2 794.7,404.9 795.8,405.0 796.8,404.6 797.8,404.6 798.8,404.7 799.9,404.7 800.9,404.3 802.0,404.1 803.0,404.1 804.0,403.6 805.1,403.3 806.1,402.8 807.1,403.3 808.2,403.5 809.2,403.9 810.3,403.8 811.3,404.4 812.3,404.3 813.4,404.4 814.4,404.8 815.5,404.6 816.5,404.8 817.5,404.8 818.6,404.4 819.6,404.5 820.7,404.6 821.8,404.8 822.8,404.8 823.9,404.8 824.9,404.6 825.9,404.5 827.0,404.6 828.0,404.5 829.0,404.5 830.1,404.2 831.1,404.4 832.1,404.6 833.2,404.0 834.2,404.4 835.3,404.2 836.3,403.5 837.4,403.7 838.4,403.6 839.4,404.0 840.5,404.3 841.5,404.2 842.6,404.3 843.6,404.6 844.8,404.8 845.9,405.6 847.1,405.6 848.2,406.1 849.4,405.7 850.6,405.0 851.8,404.9 853.0,404.4 854.0,404.6 855.0,404.0 856.1,404.4 857.1,404.1 858.2,402.8 859.2,401.6 860.5,400.5 861.9,399.0 862.8,399.3 863.7,399.4 864.7,400.4 865.6,401.7 866.9,401.6 868.1,400.9 869.0,399.5 870.0,398.1 870.9,398.0 871.8,398.5 873.1,400.7 874.1,400.4 875.2,400.7 876.2,400.7 877.2,399.3 878.1,398.0 879.0,398.0 879.9,398.3 880.9,398.1 882.0,398.2 883.0,398.3 884.3,399.7 885.5,401.5 886.8,402.8 888.0,401.4 889.3,400.7 890.3,399.7 891.4,398.7 892.4,397.5 893.6,397.2 894.9,397.7 896.1,397.5 897.4,399.6 898.5,399.3 899.5,399.0 900.6,398.2 901.7,398.0 903.0,398.1 904.2,398.3 905.5,400.5 906.5,399.9 907.6,399.8 908.6,399.0 909.7,399.2 910.8,399.3 911.8,399.5 912.9,399.8 913.9,400.6 915.0,401.4 916.0,402.6 917.3,402.5 918.5,403.1 919.8,403.1 920.7,403.8 921.6,404.8 922.9,404.1 924.1,402.8 925.4,402.8 926.6,403.0 927.5,402.0 928.5,401.3 929.5,401.2 930.4,401.1 931.4,401.3 932.5,401.9 933.5,402.4 934.7,402.9 936.0,403.1 937.2,403.0 938.5,403.0 939.7,402.6 941.0,402.9 942.2,403.0 943.2,402.9 944.1,402.2 945.3,403.2 946.6,403.6 947.8,404.3" fill="none" stroke="#4477aa" stroke-width="1" stroke-linejoin="round"/>
</svg>
<div class="t" style="left:109.30px;top:345.28px;font-size:10.6px;color:#6b6b6b;font-weight:400;font-family:'Liberation Mono', monospace;">01</div>
<div class="t" style="left:143.74px;top:345.28px;font-size:10.6px;color:#6b6b6b;font-weight:400;font-family:'Liberation Mono', monospace;">02</div>
<div class="t" style="left:174.84px;top:345.28px;font-size:10.6px;color:#6b6b6b;font-weight:400;font-family:'Liberation Mono', monospace;">03</div>
<div class="t" style="left:209.27px;top:345.28px;font-size:10.6px;color:#6b6b6b;font-weight:400;font-family:'Liberation Mono', monospace;">04</div>
<div class="t" style="left:242.60px;top:345.28px;font-size:10.6px;color:#6b6b6b;font-weight:400;font-family:'Liberation Mono', monospace;">05</div>
<div class="t" style="left:277.03px;top:345.28px;font-size:10.6px;color:#6b6b6b;font-weight:400;font-family:'Liberation Mono', monospace;">06</div>
<div class="t" style="left:310.36px;top:345.28px;font-size:10.6px;color:#6b6b6b;font-weight:400;font-family:'Liberation Mono', monospace;">07</div>
<div class="t" style="left:344.79px;top:345.28px;font-size:10.6px;color:#6b6b6b;font-weight:400;font-family:'Liberation Mono', monospace;">08</div>
<div class="t" style="left:379.23px;top:345.28px;font-size:10.6px;color:#6b6b6b;font-weight:400;font-family:'Liberation Mono', monospace;">09</div>
<div class="t" style="left:412.55px;top:345.28px;font-size:10.6px;color:#6b6b6b;font-weight:400;font-family:'Liberation Mono', monospace;">10</div>
<div class="t" style="left:446.99px;top:345.28px;font-size:10.6px;color:#6b6b6b;font-weight:400;font-family:'Liberation Mono', monospace;">11</div>
<div class="t" style="left:480.31px;top:345.28px;font-size:10.6px;color:#6b6b6b;font-weight:400;font-family:'Liberation Mono', monospace;">12</div>
<div class="t" style="left:514.75px;top:345.28px;font-size:10.6px;color:#6b6b6b;font-weight:400;font-family:'Liberation Mono', monospace;">01</div>
<div class="t" style="left:549.19px;top:345.28px;font-size:10.6px;color:#6b6b6b;font-weight:400;font-family:'Liberation Mono', monospace;">02</div>
<div class="t" style="left:580.29px;top:345.28px;font-size:10.6px;color:#6b6b6b;font-weight:400;font-family:'Liberation Mono', monospace;">03</div>
<div class="t" style="left:614.72px;top:345.28px;font-size:10.6px;color:#6b6b6b;font-weight:400;font-family:'Liberation Mono', monospace;">04</div>
<div class="t" style="left:648.05px;top:345.28px;font-size:10.6px;color:#6b6b6b;font-weight:400;font-family:'Liberation Mono', monospace;">05</div>
<div class="t" style="left:682.48px;top:345.28px;font-size:10.6px;color:#6b6b6b;font-weight:400;font-family:'Liberation Mono', monospace;">06</div>
<div class="t" style="left:715.81px;top:345.28px;font-size:10.6px;color:#6b6b6b;font-weight:400;font-family:'Liberation Mono', monospace;">07</div>
<div class="t" style="left:750.24px;top:345.28px;font-size:10.6px;color:#6b6b6b;font-weight:400;font-family:'Liberation Mono', monospace;">08</div>
<div class="t" style="left:784.68px;top:345.28px;font-size:10.6px;color:#6b6b6b;font-weight:400;font-family:'Liberation Mono', monospace;">09</div>
<div class="t" style="left:818.00px;top:345.28px;font-size:10.6px;color:#6b6b6b;font-weight:400;font-family:'Liberation Mono', monospace;">10</div>
<div class="t" style="left:852.44px;top:345.28px;font-size:10.6px;color:#6b6b6b;font-weight:400;font-family:'Liberation Mono', monospace;">11</div>
<div class="t" style="left:885.76px;top:345.28px;font-size:10.6px;color:#6b6b6b;font-weight:400;font-family:'Liberation Mono', monospace;">12</div>
<div class="t" style="left:920.20px;top:345.28px;font-size:10.6px;color:#6b6b6b;font-weight:400;font-family:'Liberation Mono', monospace;">01</div>
<div class="t" style="left:109.30px;top:367.08px;font-size:10.6px;color:#6b6b6b;font-weight:400;font-family:'Liberation Mono', monospace;">2017</div>
<div class="t" style="left:514.50px;top:367.08px;font-size:10.6px;color:#6b6b6b;font-weight:400;font-family:'Liberation Mono', monospace;">2018</div>
<div class="t" style="left:920.50px;top:367.08px;font-size:10.6px;color:#6b6b6b;font-weight:400;font-family:'Liberation Mono', monospace;letter-spacing:-0.5px;">20…</div>
<div class="t" style="right:868.90px;top:256.77px;font-size:11px;color:#6b6b6b;font-weight:400;font-family:'Liberation Mono', monospace;text-align:right;letter-spacing:-0.3px;">10<span style="margin-right:-3.2px"> </span>000<span style="margin-right:-3.2px"> </span>000<span style="margin:0 -1.15px">,</span>00</div>
<div class="t" style="right:868.90px;top:292.87px;font-size:11px;color:#6b6b6b;font-weight:400;font-family:'Liberation Mono', monospace;text-align:right;letter-spacing:-0.3px;">5<span style="margin-right:-3.2px"> </span>000<span style="margin-right:-3.2px"> </span>000<span style="margin:0 -1.15px">,</span>00</div>
<div class="t" style="right:868.90px;top:333.97px;font-size:11px;color:#6b6b6b;font-weight:400;font-family:'Liberation Mono', monospace;text-align:right;letter-spacing:-0.3px;">0<span style="margin:0 -1.15px">,</span>00</div>
<svg width="961" height="723" style="left:0;top:0">
<path d="M103 571.5 H110.5" stroke="#d9d9d9"/>
<path d="M103 542.5 H110.5" stroke="#d9d9d9"/>
<path d="M110.5 542.5 H473" stroke="#d9d9d9"/>
<path d="M103 512.5 H110.5" stroke="#d9d9d9"/>
<path d="M110.5 512.5 H473" stroke="#d9d9d9"/>
<path d="M103 482.5 H110.5" stroke="#d9d9d9"/>
<path d="M110.5 482.5 H473" stroke="#d9d9d9"/>
<path d="M103 452.5 H110.5" stroke="#d9d9d9"/>
<path d="M110.5 452.5 H473" stroke="#d9d9d9"/>
<path d="M103 422.5 H110.5" stroke="#d9d9d9"/>
<path d="M110.5 422.5 H473" stroke="#d9d9d9"/>
<path d="M110.5 422 V572" stroke="#d9d9d9"/>
<rect x="115.30" y="471.91" width="18.40" height="99.59" fill="#4477aa"/>
<rect x="141.58" y="494.36" width="18.40" height="77.14" fill="#4477aa"/>
<rect x="167.87" y="482.30" width="18.40" height="89.20" fill="#4477aa"/>
<rect x="194.15" y="478.35" width="18.40" height="93.15" fill="#4477aa"/>
<rect x="220.44" y="466.54" width="18.40" height="104.96" fill="#4477aa"/>
<rect x="246.72" y="467.01" width="18.40" height="104.49" fill="#4477aa"/>
<rect x="273.01" y="484.59" width="18.40" height="86.91" fill="#4477aa"/>
<rect x="299.29" y="495.56" width="18.40" height="75.94" fill="#4477aa"/>
<rect x="325.58" y="487.95" width="18.40" height="83.55" fill="#4477aa"/>
<rect x="351.86" y="484.39" width="18.40" height="87.11" fill="#4477aa"/>
<rect x="378.15" y="480.49" width="18.40" height="91.01" fill="#4477aa"/>
<rect x="404.43" y="463.07" width="18.40" height="108.43" fill="#4477aa"/>
<rect x="430.72" y="457.74" width="18.40" height="113.76" fill="#4477aa"/>
<rect x="457.00" y="483.23" width="17.20" height="88.27" fill="#4477aa"/>
<path d="M110.5 571.5 H474" stroke="#bdbdbd"/>
</svg>
<div class="t" style="left:124.50px;top:476.01px;font-family:'Liberation Mono', monospace;font-size:10.5px;letter-spacing:-0.3px;color:#ffffff;transform-origin:0 0;transform:rotate(-90deg) translate(-100%,-50%);line-height:1">167<span style="margin-right:-3.5px"> </span>593<span style="margin-right:-3.5px"> </span>804<span style="margin:0 -1.75px">,</span>02</div>
<div class="t" style="left:124.30px;top:576px;font-family:'Liberation Mono', monospace;font-size:10.5px;letter-spacing:-0.3px;color:#6b6b6b;transform-origin:100% 0;transform:translateX(-100%) rotate(-40deg);line-height:1">2017-янв</div>
<div class="t" style="left:150.58px;top:576px;font-family:'Liberation Mono', monospace;font-size:10.5px;letter-spacing:-0.3px;color:#6b6b6b;transform-origin:100% 0;transform:translateX(-100%) rotate(-40deg);line-height:1">2017-фев</div>
<div class="t" style="left:177.07px;top:486.40px;font-family:'Liberation Mono', monospace;font-size:10.5px;letter-spacing:-0.3px;color:#ffffff;transform-origin:0 0;transform:rotate(-90deg) translate(-100%,-50%);line-height:1">150<span style="margin-right:-3.5px"> </span>193<span style="margin-right:-3.5px"> </span>874<span style="margin:0 -1.75px">,</span>30</div>
<div class="t" style="left:176.87px;top:576px;font-family:'Liberation Mono', monospace;font-size:10.5px;letter-spacing:-0.3px;color:#6b6b6b;transform-origin:100% 0;transform:translateX(-100%) rotate(-40deg);line-height:1">2017-мар</div>
<div class="t" style="left:203.35px;top:482.45px;font-family:'Liberation Mono', monospace;font-size:10.5px;letter-spacing:-0.3px;color:#ffffff;transform-origin:0 0;transform:rotate(-90deg) translate(-100%,-50%);line-height:1">156<span style="margin-right:-3.5px"> </span>823<span style="margin-right:-3.5px"> </span>439<span style="margin:0 -1.75px">,</span>42</div>
<div class="t" style="left:203.15px;top:576px;font-family:'Liberation Mono', monospace;font-size:10.5px;letter-spacing:-0.3px;color:#6b6b6b;transform-origin:100% 0;transform:translateX(-100%) rotate(-40deg);line-height:1">2017-апр</div>
<div class="t" style="left:229.64px;top:470.64px;font-family:'Liberation Mono', monospace;font-size:10.5px;letter-spacing:-0.3px;color:#ffffff;transform-origin:0 0;transform:rotate(-90deg) translate(-100%,-50%);line-height:1">176<span style="margin-right:-3.5px"> </span>584<span style="margin-right:-3.5px"> </span>372<span style="margin:0 -1.75px">,</span>19</div>
<div class="t" style="left:229.44px;top:576px;font-family:'Liberation Mono', monospace;font-size:10.5px;letter-spacing:-0.3px;color:#6b6b6b;transform-origin:100% 0;transform:translateX(-100%) rotate(-40deg);line-height:1">2017-май</div>
<div class="t" style="left:255.92px;top:471.11px;font-family:'Liberation Mono', monospace;font-size:10.5px;letter-spacing:-0.3px;color:#ffffff;transform-origin:0 0;transform:rotate(-90deg) translate(-100%,-50%);line-height:1">175<span style="margin-right:-3.5px"> </span>805<span style="margin-right:-3.5px"> </span>626<span style="margin:0 -1.75px">,</span>86</div>
<div class="t" style="left:255.72px;top:576px;font-family:'Liberation Mono', monospace;font-size:10.5px;letter-spacing:-0.3px;color:#6b6b6b;transform-origin:100% 0;transform:translateX(-100%) rotate(-40deg);line-height:1">2017-июн</div>
<div class="t" style="left:282.21px;top:488.69px;font-family:'Liberation Mono', monospace;font-size:10.5px;letter-spacing:-0.3px;color:#ffffff;transform-origin:0 0;transform:rotate(-90deg) translate(-100%,-50%);line-height:1">146<span style="margin-right:-3.5px"> </span>358<span style="margin-right:-3.5px"> </span>742<span style="margin:0 -1.75px">,</span>07</div>
<div class="t" style="left:282.01px;top:576px;font-family:'Liberation Mono', monospace;font-size:10.5px;letter-spacing:-0.3px;color:#6b6b6b;transform-origin:100% 0;transform:translateX(-100%) rotate(-40deg);line-height:1">2017-июл</div>
<div class="t" style="left:308.29px;top:576px;font-family:'Liberation Mono', monospace;font-size:10.5px;letter-spacing:-0.3px;color:#6b6b6b;transform-origin:100% 0;transform:translateX(-100%) rotate(-40deg);line-height:1">2017-авг</div>
<div class="t" style="left:334.78px;top:492.05px;font-family:'Liberation Mono', monospace;font-size:10.5px;letter-spacing:-0.3px;color:#ffffff;transform-origin:0 0;transform:rotate(-90deg) translate(-100%,-50%);line-height:1">140<span style="margin-right:-3.5px"> </span>738<span style="margin-right:-3.5px"> </span>398<span style="margin:0 -1.75px">,</span>18</div>
<div class="t" style="left:334.58px;top:576px;font-family:'Liberation Mono', monospace;font-size:10.5px;letter-spacing:-0.3px;color:#6b6b6b;transform-origin:100% 0;transform:translateX(-100%) rotate(-40deg);line-height:1">2017-сен</div>
<div class="t" style="left:361.06px;top:488.49px;font-family:'Liberation Mono', monospace;font-size:10.5px;letter-spacing:-0.3px;color:#ffffff;transform-origin:0 0;transform:rotate(-90deg) translate(-100%,-50%);line-height:1">146<span style="margin-right:-3.5px"> </span>704<span style="margin-right:-3.5px"> </span>385<span style="margin:0 -1.75px">,</span>39</div>
<div class="t" style="left:360.86px;top:576px;font-family:'Liberation Mono', monospace;font-size:10.5px;letter-spacing:-0.3px;color:#6b6b6b;transform-origin:100% 0;transform:translateX(-100%) rotate(-40deg);line-height:1">2017-окт</div>
<div class="t" style="left:387.35px;top:484.59px;font-family:'Liberation Mono', monospace;font-size:10.5px;letter-spacing:-0.3px;color:#ffffff;transform-origin:0 0;transform:rotate(-90deg) translate(-100%,-50%);line-height:1">153<span style="margin-right:-3.5px"> </span>225<span style="margin-right:-3.5px"> </span>985<span style="margin:0 -1.75px">,</span>37</div>
<div class="t" style="left:387.15px;top:576px;font-family:'Liberation Mono', monospace;font-size:10.5px;letter-spacing:-0.3px;color:#6b6b6b;transform-origin:100% 0;transform:translateX(-100%) rotate(-40deg);line-height:1">2017-ноя</div>
<div class="t" style="left:413.63px;top:467.17px;font-family:'Liberation Mono', monospace;font-size:10.5px;letter-spacing:-0.3px;color:#ffffff;transform-origin:0 0;transform:rotate(-90deg) translate(-100%,-50%);line-height:1">182<span style="margin-right:-3.5px"> </span>402<span style="margin-right:-3.5px"> </span>729<span style="margin:0 -1.75px">,</span>29</div>
<div class="t" style="left:413.43px;top:576px;font-family:'Liberation Mono', monospace;font-size:10.5px;letter-spacing:-0.3px;color:#6b6b6b;transform-origin:100% 0;transform:translateX(-100%) rotate(-40deg);line-height:1">2017-дек</div>
<div class="t" style="left:439.92px;top:461.84px;font-family:'Liberation Mono', monospace;font-size:10.5px;letter-spacing:-0.3px;color:#ffffff;transform-origin:0 0;transform:rotate(-90deg) translate(-100%,-50%);line-height:1">191<span style="margin-right:-3.5px"> </span>327<span style="margin-right:-3.5px"> </span>104<span style="margin:0 -1.75px">,</span>28</div>
<div class="t" style="left:439.72px;top:576px;font-family:'Liberation Mono', monospace;font-size:10.5px;letter-spacing:-0.3px;color:#6b6b6b;transform-origin:100% 0;transform:translateX(-100%) rotate(-40deg);line-height:1">2018-янв</div>
<div class="t" style="left:466.20px;top:487.33px;font-family:'Liberation Mono', monospace;font-size:10.5px;letter-spacing:-0.3px;color:#ffffff;transform-origin:0 0;transform:rotate(-90deg) translate(-100%,-50%);line-height:1">148<span style="margin-right:-3.5px"> </span>635<span style="margin-right:-3.5px"> </span>778<span style="margin:0 -1.75px">,</span>02</div>
<div class="t" style="left:466.00px;top:576px;font-family:'Liberation Mono', monospace;font-size:10.5px;letter-spacing:-0.3px;color:#6b6b6b;transform-origin:100% 0;transform:translateX(-100%) rotate(-40deg);line-height:1">2018-фев</div>
<div class="t" style="right:861.90px;top:566.37px;font-size:11px;color:#6b6b6b;font-weight:400;font-family:'Liberation Mono', monospace;text-align:right;letter-spacing:-0.3px;">0<span style="margin:0 -1.15px">,</span>00</div>
<div class="t" style="right:861.90px;top:537.61px;font-size:11px;color:#6b6b6b;font-weight:400;font-family:'Liberation Mono', monospace;text-align:right;letter-spacing:-0.3px;">50<span style="margin-right:-3.2px"> </span>000<span style="margin-right:-3.2px"> </span>000<span style="margin:0 -1.15px">,</span>00</div>
<div class="t" style="right:861.90px;top:507.75px;font-size:11px;color:#6b6b6b;font-weight:400;font-family:'Liberation Mono', monospace;text-align:right;letter-spacing:-0.3px;">100<span style="margin-right:-3.2px"> </span>000<span style="margin-right:-3.2px"> </span>000<span style="margin:0 -1.15px">,</span>00</div>
<div class="t" style="right:861.90px;top:477.89px;font-size:11px;color:#6b6b6b;font-weight:400;font-family:'Liberation Mono', monospace;text-align:right;letter-spacing:-0.3px;">150<span style="margin-right:-3.2px"> </span>000<span style="margin-right:-3.2px"> </span>000<span style="margin:0 -1.15px">,</span>00</div>
<div class="t" style="right:861.90px;top:448.03px;font-size:11px;color:#6b6b6b;font-weight:400;font-family:'Liberation Mono', monospace;text-align:right;letter-spacing:-0.3px;">200<span style="margin-right:-3.2px"> </span>000<span style="margin-right:-3.2px"> </span>000<span style="margin:0 -1.15px">,</span>00</div>
<div class="t" style="right:861.90px;top:423.37px;font-size:11px;color:#6b6b6b;font-weight:400;font-family:'Liberation Mono', monospace;text-align:right;letter-spacing:-0.3px;">250<span style="margin-right:-3.2px"> </span>000<span style="margin-right:-3.2px"> </span>000<span style="margin:0 -1.15px">,</span>00</div>
<svg width="961" height="723" style="left:0;top:0">
<rect x="310.8" y="630" width="162.7" height="29.5" fill="#efefef"/>
<rect x="111.6" y="630.6" width="199.2" height="29" fill="#fff" stroke="#dcdcdc" stroke-width="1.5"/>
<rect x="113.90" y="639.8" width="10" height="19.70" fill="#4477aa"/>
<rect x="128.38" y="644" width="10" height="15.50" fill="#4477aa"/>
<rect x="142.86" y="641.4" width="10" height="18.10" fill="#4477aa"/>
<rect x="157.34" y="640.8" width="10" height="18.70" fill="#4477aa"/>
<rect x="171.82" y="638.3" width="10" height="21.20" fill="#4477aa"/>
<rect x="186.30" y="638.7" width="10" height="20.80" fill="#4477aa"/>
<rect x="200.78" y="641.9" width="10" height="17.60" fill="#4477aa"/>
<rect x="215.26" y="644" width="10" height="15.50" fill="#4477aa"/>
<rect x="229.74" y="642.9" width="10" height="16.60" fill="#4477aa"/>
<rect x="244.22" y="641.9" width="10" height="17.60" fill="#4477aa"/>
<rect x="258.70" y="640.8" width="10" height="18.70" fill="#4477aa"/>
<rect x="273.18" y="637.7" width="10" height="21.80" fill="#4477aa"/>
<rect x="287.66" y="636.6" width="10" height="22.90" fill="#4477aa"/>
<rect x="302.14" y="641.9" width="10" height="17.60" fill="#4477aa"/>
<rect x="316.62" y="638.1" width="10" height="21.40" fill="#4477aa"/>
<rect x="331.10" y="636" width="10" height="23.50" fill="#4477aa"/>
<rect x="345.58" y="634.6" width="10" height="24.90" fill="#4477aa"/>
<rect x="360.06" y="634.6" width="10" height="24.90" fill="#4477aa"/>
<rect x="374.54" y="636" width="10" height="23.50" fill="#4477aa"/>
<rect x="389.02" y="642.9" width="10" height="16.60" fill="#4477aa"/>
<rect x="403.50" y="648.5" width="10" height="11.00" fill="#4477aa"/>
<rect x="417.98" y="649.8" width="10" height="9.70" fill="#4477aa"/>
<rect x="432.46" y="646" width="10" height="13.50" fill="#4477aa"/>
<rect x="446.94" y="642.9" width="10" height="16.60" fill="#4477aa"/>
<rect x="461.42" y="647.1" width="10" height="12.40" fill="#4477aa"/>
</svg>
<div style="position:absolute;left:7px;top:669px;width:464px;height:22px;box-sizing:border-box;border:1px solid #e3e3e3;border-radius:3px;background:#fff;"></div>
<div style="position:absolute;left:100px;top:669px;width:1px;height:22px;background:#dcdcdc;"></div>
<div style="position:absolute;left:378px;top:669px;width:1px;height:22px;background:#dcdcdc;"></div>
<div style="position:absolute;left:192px;top:669px;width:94px;height:22px;background:#009845;"></div>
<div class="t" style="left:8.50px;width:90px;top:676.01px;font-size:11.8px;color:#595959;font-weight:400;font-family:'Liberation Sans', sans-serif;text-align:center;letter-spacing:-0.1px;">Год</div>
<div class="t" style="left:101.00px;width:90px;top:676.01px;font-size:11.8px;color:#595959;font-weight:400;font-family:'Liberation Sans', sans-serif;text-align:center;letter-spacing:-0.1px;">Год-Квартал</div>
<div class="t" style="left:194.00px;width:90px;top:676.01px;font-size:11.8px;color:#ffffff;font-weight:700;font-family:'Liberation Sans', sans-serif;text-align:center;letter-spacing:-0.3px;">Год-Месяц</div>
<div class="t" style="left:287.00px;width:90px;top:676.01px;font-size:11.8px;color:#595959;font-weight:400;font-family:'Liberation Sans', sans-serif;text-align:center;letter-spacing:-0.1px;">Год-Неделя</div>
<div class="t" style="left:379.50px;width:90px;top:676.01px;font-size:11.8px;color:#595959;font-weight:400;font-family:'Liberation Sans', sans-serif;text-align:center;letter-spacing:-0.1px;">Дата</div>
<svg width="961" height="723" style="left:0;top:0">
<path d="M578.3 571.5 H586.8" stroke="#d9d9d9"/>
<path d="M578.3 522.5 H586.8" stroke="#d9d9d9"/>
<path d="M578.3 473.5 H586.8" stroke="#d9d9d9"/>
<path d="M578.3 424.5 H586.8" stroke="#d9d9d9"/>
<path d="M586.5 424 V572" stroke="#d9d9d9"/>
<path d="M586.8 424.5 H828 M586.8 473.5 H828" stroke="#d9d9d9"/>
<polygon points="586.8,501.1 609.2,508.7 635.5,502.5 661.7,500 687.7,496.5 713.9,482.2 740.2,478.1 766.7,498.7 792.7,482.2 818.6,474.9 828.1,472.2 828.1,568.8 818.6,568.8 792.7,569.3 766.7,569.6 740.2,569.0 713.9,568.6 687.7,569.5 661.7,569.5 635.5,569.3 609.2,567.7 586.8,565.5" fill="#f5c4ee"/>
<polygon points="586.8,565.5 609.2,567.7 635.5,569.3 661.7,569.5 687.7,569.5 713.9,568.6 740.2,569.0 766.7,569.6 792.7,569.3 818.6,568.8 828.1,568.8 828.1,571.3 586.8,571.3" fill="#dcefcb"/>
<path d="M586.8 522.5 H828" stroke="#d7a6d0" stroke-width="1"/>
<polyline points="586.8,501.1 609.2,508.7 635.5,502.5 661.7,500 687.7,496.5 713.9,482.2 740.2,478.1 766.7,498.7 792.7,482.2 818.6,474.9 828.1,472.2" fill="none" stroke="#e340c8" stroke-width="1.1"/>
<polyline points="586.8,565.5 609.2,567.7 635.5,569.3 661.7,569.5 687.7,569.5 713.9,568.6 740.2,569.0 766.7,569.6 792.7,569.3 818.6,568.8 828.1,568.8" fill="none" stroke="#8fce60" stroke-width="1.1"/>
<circle cx="609.2" cy="509.0" r="2.9" fill="#e340c8"/>
<circle cx="635.5" cy="502.8" r="2.9" fill="#e340c8"/>
<circle cx="661.7" cy="500.3" r="2.9" fill="#e340c8"/>
<circle cx="687.7" cy="496.8" r="2.9" fill="#e340c8"/>
<circle cx="713.9" cy="482.5" r="2.9" fill="#e340c8"/>
<circle cx="740.2" cy="478.40000000000003" r="2.9" fill="#e340c8"/>
<circle cx="766.7" cy="499.0" r="2.9" fill="#e340c8"/>
<circle cx="792.7" cy="482.5" r="2.9" fill="#e340c8"/>
<circle cx="818.6" cy="475.2" r="2.9" fill="#e340c8"/>
<circle cx="609.2" cy="568.0" r="2.9" fill="#8fce60"/>
<circle cx="635.5" cy="569.5999999999999" r="2.9" fill="#8fce60"/>
<circle cx="661.7" cy="569.8" r="2.9" fill="#8fce60"/>
<circle cx="687.7" cy="569.8" r="2.9" fill="#8fce60"/>
<circle cx="713.9" cy="568.9" r="2.9" fill="#8fce60"/>
<circle cx="740.2" cy="569.3" r="2.9" fill="#8fce60"/>
<circle cx="766.7" cy="569.9" r="2.9" fill="#8fce60"/>
<circle cx="792.7" cy="569.5999999999999" r="2.9" fill="#8fce60"/>
<circle cx="818.6" cy="569.0999999999999" r="2.9" fill="#8fce60"/>
<path d="M586.8 571.5 H828" stroke="#bdbdbd"/>
<path d="M836 465.8 H847.4" stroke="#8fce60" stroke-width="1.6"/><circle cx="841.7" cy="465.8" r="2.9" fill="#8fce60"/>
<path d="M836 485.6 H847.4" stroke="#e340c8" stroke-width="1.6"/><circle cx="841.7" cy="485.6" r="2.9" fill="#e340c8"/>
</svg>
<div class="t" style="right:387.00px;top:566.37px;font-size:11px;color:#6b6b6b;font-weight:400;font-family:'Liberation Mono', monospace;text-align:right;letter-spacing:-0.3px;">0<span style="margin:0 -1.15px">,</span>00</div>
<div class="t" style="right:387.00px;top:518.17px;font-size:11px;color:#6b6b6b;font-weight:400;font-family:'Liberation Mono', monospace;text-align:right;letter-spacing:-0.3px;">100<span style="margin-right:-3.2px"> </span>000<span style="margin-right:-3.2px"> </span>000<span style="margin:0 -1.15px">,</span>00</div>
<div class="t" style="right:387.00px;top:469.07px;font-size:11px;color:#6b6b6b;font-weight:400;font-family:'Liberation Mono', monospace;text-align:right;letter-spacing:-0.3px;">200<span style="margin-right:-3.2px"> </span>000<span style="margin-right:-3.2px"> </span>000<span style="margin:0 -1.15px">,</span>00</div>
<div class="t" style="right:387.00px;top:426.07px;font-size:11px;color:#6b6b6b;font-weight:400;font-family:'Liberation Mono', monospace;text-align:right;letter-spacing:-0.3px;">300<span style="margin-right:-3.2px"> </span>000<span style="margin-right:-3.2px"> </span>000<span style="margin:0 -1.15px">,</span>00</div>
<div class="t" style="left:611.00px;top:574.5px;font-family:'Liberation Mono', monospace;font-size:10.5px;letter-spacing:-0.3px;color:#6b6b6b;transform-origin:100% 0;transform:translateX(-100%) rotate(-40deg);line-height:1">2017-авг</div>
<div class="t" style="left:637.30px;top:574.5px;font-family:'Liberation Mono', monospace;font-size:10.5px;letter-spacing:-0.3px;color:#6b6b6b;transform-origin:100% 0;transform:translateX(-100%) rotate(-40deg);line-height:1">2017-сен</div>
<div class="t" style="left:663.50px;top:574.5px;font-family:'Liberation Mono', monospace;font-size:10.5px;letter-spacing:-0.3px;color:#6b6b6b;transform-origin:100% 0;transform:translateX(-100%) rotate(-40deg);line-height:1">2017-окт</div>
<div class="t" style="left:689.50px;top:574.5px;font-family:'Liberation Mono', monospace;font-size:10.5px;letter-spacing:-0.3px;color:#6b6b6b;transform-origin:100% 0;transform:translateX(-100%) rotate(-40deg);line-height:1">2017-ноя</div>
<div class="t" style="left:715.70px;top:574.5px;font-family:'Liberation Mono', monospace;font-size:10.5px;letter-spacing:-0.3px;color:#6b6b6b;transform-origin:100% 0;transform:translateX(-100%) rotate(-40deg);line-height:1">2017-дек</div>
<div class="t" style="left:742.00px;top:574.5px;font-family:'Liberation Mono', monospace;font-size:10.5px;letter-spacing:-0.3px;color:#6b6b6b;transform-origin:100% 0;transform:translateX(-100%) rotate(-40deg);line-height:1">2018-янв</div>
<div class="t" style="left:768.50px;top:574.5px;font-family:'Liberation Mono', monospace;font-size:10.5px;letter-spacing:-0.3px;color:#6b6b6b;transform-origin:100% 0;transform:translateX(-100%) rotate(-40deg);line-height:1">2018-фев</div>
<div class="t" style="left:794.50px;top:574.5px;font-family:'Liberation Mono', monospace;font-size:10.5px;letter-spacing:-0.3px;color:#6b6b6b;transform-origin:100% 0;transform:translateX(-100%) rotate(-40deg);line-height:1">2018-мар</div>
<div class="t" style="left:820.40px;top:574.5px;font-family:'Liberation Mono', monospace;font-size:10.5px;letter-spacing:-0.3px;color:#6b6b6b;transform-origin:100% 0;transform:translateX(-100%) rotate(-40deg);line-height:1">2018-апр</div>
<div class="t" style="left:837.00px;top:432.79px;font-size:13.6px;color:#595959;font-weight:400;font-family:'Liberation Sans', sans-serif;letter-spacing:0.15px;">Тип контрагента</div>
<div class="t" style="left:855.40px;top:460.57px;font-size:12.2px;color:#595959;font-weight:400;font-family:'Liberation Sans', sans-serif;">Физлицо</div>
<div class="t" style="left:855.40px;top:480.27px;font-size:12.2px;color:#595959;font-weight:400;font-family:'Liberation Sans', sans-serif;">Юрлицо</div>
<svg width="961" height="723" style="left:0;top:0">
<defs><clipPath id="win"><rect x="650.9" y="630" width="88.3" height="29.6"/></clipPath></defs>
<rect x="586.8" y="630" width="241.2" height="29.6" fill="#e6e6e6"/>
<polygon points="592,643 602.2,646.5 611,644.5 619.7,644.5 631.4,641.6 640.1,642.2 650.3,645.4 659.1,646.8 667.8,645.7 678,645.1 688.2,644.5 698.4,641.6 707.1,640.4 717.3,645.1 727.5,641.6 739.2,639.3 749.4,638.1 758.1,638.1 765.4,640.1 775.6,646 785.8,650.3 794.6,651.8 804.8,648.9 813.5,646 823.7,649.7 823.7,659.3 592,659.3" fill="#cccccc"/>
<polyline points="592,643 602.2,646.5 611,644.5 619.7,644.5 631.4,641.6 640.1,642.2 650.3,645.4 659.1,646.8 667.8,645.7 678,645.1 688.2,644.5 698.4,641.6 707.1,640.4 717.3,645.1 727.5,641.6 739.2,639.3 749.4,638.1 758.1,638.1 765.4,640.1 775.6,646 785.8,650.3 794.6,651.8 804.8,648.9 813.5,646 823.7,649.7" fill="none" stroke="#9a9a9a" stroke-width="1"/>
<g clip-path="url(#win)"><rect x="650.9" y="630" width="88.3" height="29.6" fill="#ffffff"/>
<polygon points="592,643 602.2,646.5 611,644.5 619.7,644.5 631.4,641.6 640.1,642.2 650.3,645.4 659.1,646.8 667.8,645.7 678,645.1 688.2,644.5 698.4,641.6 707.1,640.4 717.3,645.1 727.5,641.6 739.2,639.3 749.4,638.1 758.1,638.1 765.4,640.1 775.6,646 785.8,650.3 794.6,651.8 804.8,648.9 813.5,646 823.7,649.7 823.7,659.3 592,659.3" fill="#e4e4e4"/>
<polyline points="592,643 602.2,646.5 611,644.5 619.7,644.5 631.4,641.6 640.1,642.2 650.3,645.4 659.1,646.8 667.8,645.7 678,645.1 688.2,644.5 698.4,641.6 707.1,640.4 717.3,645.1 727.5,641.6 739.2,639.3 749.4,638.1 758.1,638.1 765.4,640.1 775.6,646 785.8,650.3 794.6,651.8 804.8,648.9 813.5,646 823.7,649.7" fill="none" stroke="#b0b0b0" stroke-width="1"/></g>
<rect x="651.4" y="630.5" width="87.8" height="28.6" fill="none" stroke="#c8c8c8" stroke-width="1"/>
<path d="M592 659.5 H823.7" stroke="#999999" stroke-width="1"/>
</svg>
<div style="position:absolute;left:483px;top:669px;width:467.5px;height:21.8px;box-sizing:border-box;border:1px solid #e3e3e3;border-radius:3px;background:#fff;"></div>
<div class="t" style="left:493.80px;top:676.53px;font-size:11.9px;color:#505050;font-weight:400;font-family:'Liberation Sans', sans-serif;-webkit-text-stroke:0.2px #505050;">Тип контрагента</div>
<svg width="961" height="723" style="left:0;top:0"><path d="M931.8 677 L940.3 677 L936.05 683 Z" fill="#595959"/></svg>
</body></html>
